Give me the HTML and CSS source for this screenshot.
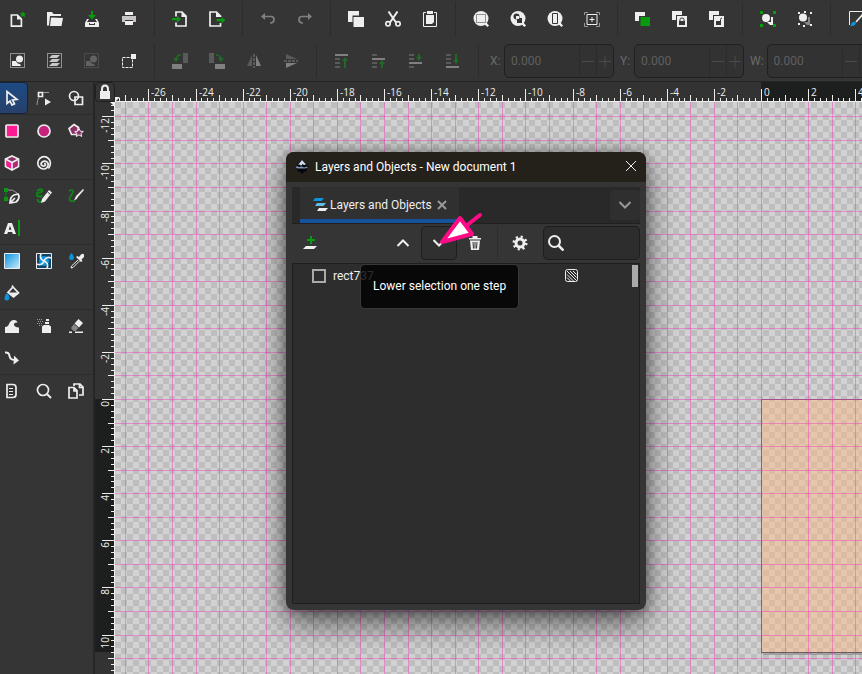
FILE: index.html
```html
<!DOCTYPE html>
<html lang="en">
<head>
    <meta charset="UTF-8">
    <meta name="viewport" content="width=device-width, initial-scale=1.0">
    <title>New document 1</title>
    <link rel="stylesheet" href="styles.css">
</head>
<body>

<header class="toolbars">
    <div class="toolbar">
        <button aria-label="New"><svg viewBox="0 0 16 16"><path class="line thick" d="M1.4 4h6l4 4v7.2h-10z"/><path d="M7 3.5v5h5z"/><path class="green" d="M13 0l1 2.3 2.4.1-1.9 1.5.7 2.4L13 5l-2.2 1.3.7-2.4-1.9-1.5 2.4-.1z"/></svg></button>
        <button aria-label="Open"><svg viewBox="0 0 16 16"><path d="M0 1h5l1.500 2H14v2H3L2 14.500H0z"/><path d="M4 6.500l12 .5-1.500 8H3z"/></svg></button>
        <button aria-label="Save"><svg viewBox="0 0 16 16"><path class="green" d="M7 0h2v4h3L8 8.500 4 4h3z"/><path d="M3 8h2l-2 3h10l-2-3h2l2 4v4H1v-4zM5 12v2h6v-2h-1v1H6v-1z" fill-rule="evenodd"/></svg></button>
        <button aria-label="Print"><svg viewBox="0 0 16 16"><path d="M4 1h8v3H4z"/><path fill="#c8c4c4" d="M1 5h14v6h-3V9H4v2H1z"/><path d="M4 10h8v4H4z"/></svg></button>
        <span class="sep"></span>
        <button aria-label="Import"><svg viewBox="0 0 16 16"><path class="line thick" d="M4 5.500V1h6l4 4v10H4v-3.500"/><path d="M9.500 1v5H15z"/><path class="green" d="M0 7h5V5l4 3.200-4 3.200V9.300H0z"/></svg></button>
        <button aria-label="Export"><svg viewBox="0 0 16 16"><path class="line thick" d="M11.500 6V5l-4-4H1v14h10.500v-3"/><path d="M7 1v5h5.500z"/><path class="green" d="M7.500 8h5V6l4 3.200-4 3.200v-2.100h-5z"/></svg></button>
        <span class="sep"></span>
        <button class="off" aria-label="Undo"><svg viewBox="0 0 16 16"><path class="line thick" d="M4 5.500h7q3 0 3 3t-3 3.500h-1"/><path d="M1 5.500L5 2v7z"/></svg></button>
        <button class="off" aria-label="Redo"><svg viewBox="0 0 16 16"><path class="line thick" d="M12 5.500H5q-3 0-3 3T5 12h1"/><path d="M15 5.500L11 2v7z"/></svg></button>
        <span class="sep"></span>
        <button aria-label="Copy"><svg viewBox="0 0 16 16"><path d="M0 0h11v4.500H4.500V11H0z"/><path d="M5.500 6H16v10H5.500z"/></svg></button>
        <button aria-label="Cut"><svg viewBox="0 0 16 16"><circle class="line thick" cx="3" cy="12.800" r="2.200"/><circle class="line thick" cx="13" cy="12.800" r="2.200"/><path class="line" stroke-width="2" d="M3.500.5l7.500 11M12.500.5L5 11.500"/></svg></button>
        <button aria-label="Paste"><svg viewBox="0 0 16 16"><path class="line" d="M4 1.500H1.500v14h13v-14H12"/><path d="M5 0h6v3H5zM4 4h8v7l-2 2H4z"/></svg></button>
        <span class="sep"></span>
        <button aria-label="Zoom selection"><svg viewBox="0 0 16 16"><circle cx="8" cy="7.500" r="7.500"/><path d="M11 13l2-2 3 3.500-1.500 1.500z"/><path class="cut dots" d="M3.500 3.500h9v8h-9z"/></svg></button>
        <button aria-label="Zoom drawing"><svg viewBox="0 0 16 16"><circle cx="8" cy="7.500" r="7.500"/><path d="M11 13l2-2 3 3.500-1.500 1.500z"/><circle class="hole" cx="6.500" cy="5.500" r="3"/><path class="hole" d="M7 7h5v5H7z"/><path d="M6 5h3v3H6z"/></svg></button>
        <button aria-label="Zoom page"><svg viewBox="0 0 16 16"><circle cx="8" cy="7.500" r="7.500"/><path d="M11 13l2-2 3 3.500-1.500 1.500z"/><path class="cut" d="M5.500 2.500h5v10h-5z"/></svg></button>
        <button aria-label="Center page"><svg viewBox="0 0 16 16"><path class="line dim" d="M.5 4V1.500H4M12 1.500h3.500V4M15.500 12v3.500H12M4 15.500H.5V12"/><path class="line" d="M3 3.500h10v10H3zM8 6v5M5.500 8.500h5"/></svg></button>
        <span class="sep"></span>
        <button aria-label="Duplicate"><svg viewBox="0 0 16 16"><path d="M0 1h10v4H4v5H0z"/><path class="green" d="M5.500 6H15v9H5.500z"/></svg></button>
        <button aria-label="Clone"><svg viewBox="0 0 16 16"><path d="M0 0h10v4H4v5H0z"/><path d="M5 5h10v11H5z"/><path class="cut" d="M8 10V8.500Q8 7 10 7t2 1.500V10"/><path class="hole" d="M7 10h6v4H7z"/></svg></button>
        <button aria-label="Unlink clone"><svg viewBox="0 0 16 16"><path d="M0 0h10v4H4v5H0z"/><path d="M5 5h10v11H5z"/><path class="cut" d="M11.500 10V8.500Q11.500 7 13 7"/><path class="hole" d="M7 10h5v4H7z"/></svg></button>
        <span class="sep"></span>
        <button aria-label="Group"><svg viewBox="0 0 16 16"><path class="green" d="M0 0h3v3H0zM13 0h3v3h-3zM0 13h3v3H0zM13 13h3v3h-3z"/><circle cx="6" cy="7" r="4"/><path d="M11 6v5H7l3 3h3V6z"/></svg></button>
        <button aria-label="Ungroup"><svg viewBox="0 0 16 16"><path d="M1 1h2v2H1zM7 0h2v2H7zM13 1h2v2h-2zM1 12h2v2H1zM6 14h2v2H6zM13 13h2v2h-2z"/><circle cx="6" cy="6.500" r="4"/><path fill="#888" d="M11 6v5H7l3 3h3V6z"/></svg></button>
        <span class="sep"></span>
        <button aria-label="Fill and stroke"><svg viewBox="0 0 16 16"><path class="line" d="M1.500 14V.5H16"/><path class="line thick" d="M16 2l-8 9"/><path class="blue" d="M1 15.500q2-.5 2.500-3T7 11l1 1q0 3-7 3.500z"/></svg></button>
    </div>
    <div class="toolbar">
        <button aria-label="Select all"><svg viewBox="0 0 16 16"><path class="line dots" d="M.5.5h14v14H.500z"/><circle cx="9.500" cy="6" r="3.500"/><path d="M2 8h4q1 3 4 3l1 2H2z"/></svg></button>
        <button aria-label="Select all in all layers"><svg viewBox="0 0 16 16"><path class="line dots" d="M.5.5h14v14H.500z"/><path fill="#c8c8c8" d="M5 2h8l-3 3H2zM5 6h8l-3 3H2zM5 10h8l-3 3H2z"/></svg></button>
        <button class="off" aria-label="Deselect"><svg viewBox="0 0 16 16" opacity=".6"><path class="line dots" d="M.5.5h14v14H.500z"/><circle cx="9.500" cy="6" r="3.500"/><path d="M2 8h4q1 3 4 3l1 2H2z"/></svg></button>
        <button aria-label="Touch selection"><svg viewBox="0 0 16 16"><path class="line dashes" d="M1.500 4.500h10v10h-10z"/><path d="M10 1h5v5h-5z"/></svg></button>
        <span class="sep"></span>
        <button class="off" aria-label="Rotate left"><svg viewBox="0 0 16 16"><path d="M0 11h10v5H0z"/><path fill="#5a5a5a" d="M11 0h5v10h-5z"/><path class="line leaf thick" d="M9 2Q5 2 4 6"/><path class="leaf" d="M1 5h6l-3 4z"/></svg></button>
        <button class="off" aria-label="Rotate right"><svg viewBox="0 0 16 16"><path d="M6 11h10v5H6z"/><path fill="#5a5a5a" d="M0 0h5v10H0z"/><path class="line leaf thick" d="M7 2q4 0 5 4"/><path class="leaf" d="M9 5h6l-3 4z"/></svg></button>
        <button class="off" aria-label="Flip horizontal"><svg viewBox="0 0 16 16"><path fill="#5a5a5a" d="M6 2v11H1z"/><path d="M10 2v11h5z"/><path class="line dashes" d="M8 1v14"/></svg></button>
        <button class="off" aria-label="Flip vertical"><svg viewBox="0 0 16 16"><path fill="#5a5a5a" d="M3 6h11L3 1z"/><path d="M3 10h11L3 15z"/><path class="line dashes" d="M1 8h14"/></svg></button>
        <span class="sep"></span>
        <button class="off" aria-label="Raise to top"><svg viewBox="0 0 16 16"><path d="M1 1h13v2H1z"/><path fill="#5a5a5a" d="M1 5h5v2H1zM1 9h5v2H1zM1 13h5v2H1z"/><path class="leaf" d="M10 15V8H8l3-4 3 4h-2v7z"/></svg></button>
        <button class="off" aria-label="Raise"><svg viewBox="0 0 16 16"><path d="M1 5h13v2H1z"/><path fill="#5a5a5a" d="M1 1h5v2H1zM1 9h5v2H1zM1 13h5v2H1z"/><path class="leaf" d="M10 15v-4H8l3-4 3 4h-2v4z"/></svg></button>
        <button class="off" aria-label="Lower"><svg viewBox="0 0 16 16"><path d="M1 9h13v2H1z"/><path fill="#5a5a5a" d="M1 1h5v2H1zM1 5h5v2H1zM1 13h5v2H1z"/><path class="leaf" d="M10 1v3H8l3 4 3-4h-2V1z"/></svg></button>
        <button class="off" aria-label="Lower to bottom"><svg viewBox="0 0 16 16"><path d="M1 13h13v2H1z"/><path fill="#5a5a5a" d="M1 1h5v2H1zM1 5h5v2H1zM1 9h5v2H1z"/><path class="leaf" d="M10 1v6H8l3 4 3-4h-2V1z"/></svg></button>
        <span class="sep"></span>
        <label for="pos-x">X:</label>
        <div class="spin"><input id="pos-x" type="text" value="0.000" disabled><button disabled aria-label="Less"><svg viewBox="0 0 16 16"><path class="line" d="M2 8.500h12"/></svg></button><button disabled aria-label="More"><svg viewBox="0 0 16 16"><path class="line" d="M2 8.500h12M8 2.500v12"/></svg></button></div>
        <label for="pos-y">Y:</label>
        <div class="spin"><input id="pos-y" type="text" value="0.000" disabled><button disabled aria-label="Less"><svg viewBox="0 0 16 16"><path class="line" d="M2 8.500h12"/></svg></button><button disabled aria-label="More"><svg viewBox="0 0 16 16"><path class="line" d="M2 8.500h12M8 2.500v12"/></svg></button></div>
        <label for="size-w">W:</label>
        <div class="spin"><input id="size-w" type="text" value="0.000" disabled><button disabled aria-label="Less"><svg viewBox="0 0 16 16"><path class="line" d="M2 8.500h12"/></svg></button><button disabled aria-label="More"><svg viewBox="0 0 16 16"><path class="line" d="M2 8.500h12M8 2.500v12"/></svg></button></div>
    </div>
</header>

<main class="workspace">
    <nav class="toolbox">
        <div class="tools">
            <button class="active" aria-label="Selector"><svg viewBox="0 0 16 16"><path class="line thick" d="M3 1.500v12l3-2.500 2 4 2.500-1.200-2-3.800 4.500-.5z"/></svg></button>
            <button aria-label="Node"><svg viewBox="0 0 16 16"><path class="line thick" d="M2.500 2.500h4v4h-4z"/><path class="line dim" d="M7 2.500h6M3 7q-2 3-2 8"/><path d="M9 8.500l6 3.500-6 3.500z"/></svg></button>
            <button aria-label="Shape builder"><svg viewBox="0 0 16 16"><circle class="line thick" cx="6" cy="6" r="4.500"/><path class="line thick" d="M7 7h7.500v7.500H7z"/></svg></button>
        </div>
        <div class="tools">
            <button aria-label="Rectangle"><svg viewBox="0 0 16 16"><rect class="line thick pink" x="2" y="2" width="12" height="12" rx="1"/></svg></button>
            <button aria-label="Ellipse"><svg viewBox="0 0 16 16"><circle class="line thick magenta" cx="8" cy="8" r="6"/></svg></button>
            <button aria-label="Star"><svg viewBox="0 0 16 16"><path class="line thick plum" d="M6 1.500l4.500 3-1.500 7H3.500L1 5.500z"/><path class="line plum" d="M11 5.500l1.300 2.700 3 .3-2.300 2 .7 3-2.700-1.600-2.700 1.600.7-3-2.300-2 3-.3z"/></svg></button>
            <button aria-label="3D box"><svg viewBox="0 0 16 16"><path class="line thick plum" d="M8 1l6.500 3v7.500L8 15l-6.500-3.500V4z"/><path class="pink" d="M2.500 5.500L7 8v5.500l-4.500-2.500z"/><path fill="#b02a76" d="M13.500 5.500L9 8v5.500l4.500-2.500z"/><path class="line thick" d="M1.500 4L8 7.500 14.500 4M8 7.500V15"/></svg></button>
            <button aria-label="Spiral"><svg viewBox="0 0 16 16"><path class="line thick" d="M8 8.500a1.300 1.300 0 0 1 1.500 1.500A2.500 2.500 0 0 1 5 9a3.700 3.700 0 0 1 7.200 0 4.600 4.600 0 0 1-4.700 5A6 6 0 0 1 1.800 8 6.300 6.300 0 0 1 14.400 8q0 3-2 5.500"/></svg></button>
        </div>
        <div class="tools">
            <button aria-label="Pen"><svg viewBox="0 0 16 16"><path class="green" d="M0 0h4v4H0zM0 9h4v4H0z"/><path class="line vine" d="M2 2v9"/><path class="line dim" d="M4 2q5-1 9 3"/><path class="line thick" d="M6 15q0-6 4-8l4-1 1 2q0 4-3 6zM6 15l5-5"/></svg></button>
            <button aria-label="Pencil"><svg viewBox="0 0 16 16"><path class="line vine" stroke-width="2" d="M1 3q4-3 5-1T2 5t0 3 3-1M2 11q-1 3 3 3"/><path d="M6 11l7-9 3 2.500-7 9-4 1.500z"/><path class="cut" d="M11.500 4l3 2.500"/></svg></button>
            <button aria-label="Calligraphy"><svg viewBox="0 0 16 16"><path class="line vine thick" d="M1 3q4-2 4 0T2 9q-2 5 5 4"/><path d="M15 1l1 1-6 7q-1 3-4 3.500Q7 10 8 8z"/></svg></button>
            <button aria-label="Text"><svg viewBox="0 0 16 16"><path d="M4 3h4l4 11H8.800l-.7-2H4l-.8 2H0zM4.700 9.700h2.700L6 5.700z" fill-rule="evenodd"/><path class="green" d="M14 0h2v16h-2z"/></svg></button>
        </div>
        <div class="tools">
            <button aria-label="Gradient"><svg viewBox="0 0 16 16"><defs><linearGradient id="sky" x2="1" y2="1"><stop stop-color="#0a94e0"/><stop offset="1" stop-color="#c8e8fa"/></linearGradient></defs><path fill="url(#sky)" d="M1 1h14v14H1z"/><path class="line" d="M.5.5h15v15H.500z"/></svg></button>
            <button aria-label="Mesh"><svg viewBox="0 0 16 16"><path fill="#0c4568" d="M1 1h14v14H1z"/><circle class="blue" cx="8" cy="8" r="5"/><path class="line" d="M.5.5h15v15H.500z"/><path class="line thick" d="M8 8q-5-2-3-7M8 8q5 2 3 7M8 8q2-5 7-3M8 8q-2 5-7 3"/></svg></button>
            <button aria-label="Dropper"><svg viewBox="0 0 16 16"><path class="blue" d="M3.500 0Q6 3 6 5 5.500 7 3.500 7T1 5q0-2 2.500-5z"/><path class="line" d="M10 7l-6.500 6-.5 2 2-.5L11.500 8"/><path d="M8 4l1.500-1 1.500 1 2-2.500q2-1.500 3 0t-.5 3l-2 2 1 1.500-1.500 1z"/></svg></button>
            <button aria-label="Paint bucket"><svg viewBox="0 0 16 16"><path class="line thick" d="M9 2l5.500 6-5 4-5.500-4.500zM9 2L8 .5"/><path d="M5 7.500h9.500L10 12z"/><path class="blue" d="M3 8q2.500 3 2.500 5T3 15.500.5 13 3 8z"/></svg></button>
        </div>
        <div class="tools">
            <button aria-label="Tweak"><svg viewBox="0 0 16 16"><path d="M1 15V9q3 0 4-3 1.500-4 5-4 3 0 3.500 2.500Q10 4 10 6.500 10 9 15 9.500V15z"/></svg></button>
            <button aria-label="Spray"><svg viewBox="0 0 16 16"><path d="M6 8.500L8 7h5l2 1.500V15H6zM9 4h4v2H9zM10 1h3v2h-3z"/><path class="line dim dots" d="M1 1.500h6M2 3.500h6M1 5.500h6M3 7.500h3"/></svg></button>
            <button aria-label="Eraser"><svg viewBox="0 0 16 16"><path d="M10.500 1l4.500 4-4 4.500-4.500-4zM1 13.500h3v1.500H1zM7 13.500h8v1.500H7z"/><path class="dimfill" d="M6 6l4.500 4-3 3h-2L3 10z"/></svg></button>
            <button aria-label="Connector"><svg viewBox="0 0 16 16"><path class="line" stroke-width="2" d="M1 2.500q4-.5 4.500 3.500T11 10"/><path d="M10 5.500l5 5-5.500 4z"/></svg></button>
        </div>
        <div class="tools">
            <button aria-label="Measure"><svg viewBox="0 0 16 16"><path class="line thick" d="M3 1.500h6q3 0 3 3v7q0 3-3 3H3z"/><path class="line" d="M5 5.500h4M5 8.500h4M5 11.500h4"/></svg></button>
            <button aria-label="Zoom"><svg viewBox="0 0 16 16"><circle class="line thick" cx="7" cy="7" r="5.500"/><path class="line" stroke-width="2" d="M11 11l4 4"/></svg></button>
            <button aria-label="Pages"><svg viewBox="0 0 16 16"><path class="line thick" d="M1 4.500h5l3 3V15H1zM6 3V1h6l3 3v8h-4M6 4.500V8h3M11.500 1v3.500H15"/></svg></button>
        </div>
    </nav>

    <section class="desk">
        <button class="guide-lock" aria-label="Lock guides"><svg viewBox="0 0 16 16"><path class="line" stroke-width="2" d="M5 8V5q0-3.500 3-3.500T11 5v3"/><path d="M3 7h10v8H3z"/></svg></button>
        <svg class="ruler" id="rulerTop"></svg>
        <svg class="ruler" id="rulerLeft"></svg>
        <svg class="canvas" id="canvas"></svg>
    </section>
</main>

<div class="dialog" role="dialog" aria-labelledby="dialogTitle">
    <div class="titlebar">
        <svg viewBox="0 0 16 16"><path fill="#05070c" d="M8 1l7 7-3 2 1 2-3 1-2 2-2-2-3-1 1-2-3-2z"/><path fill="#cfdcf0" d="M8 1l4 4.500-2 .5-1.500-1L7 7 6 5.500 4 6z"/><path fill="#7f97bd" d="M3 7l2 1 3-.5 2 1 3-1 1 1-3 1H4L1.500 8.500z"/></svg>
        <h1 id="dialogTitle">Layers and Objects - New document 1</h1>
        <button aria-label="Close"><svg viewBox="0 0 16 16"><path class="line" d="M3 2l10 10M13 2L3 12"/></svg></button>
    </div>
    <div class="tabs">
        <div class="tab">
            <svg viewBox="0 0 16 16"><path class="blue" d="M3 1h9l-2.500 3H1z"/><path fill="#62bdeb" d="M5 6h9l-2.500 3H3z"/><path d="M7 11h9l-2.500 3H5z"/></svg>
            <span>Layers and Objects</span>
            <button aria-label="Close tab"><svg viewBox="0 0 16 16"><path class="line dim" stroke-width="2" d="M4 4l8 8M12 4l-8 8"/></svg></button>
        </div>
        <button class="menu" aria-label="Dialogs"><svg viewBox="0 0 16 16"><path class="line dim" stroke-width="2" d="M2.500 5L8 10.500 13.500 5"/></svg></button>
    </div>
    <div class="actions">
        <button aria-label="Add layer"><svg viewBox="0 0 16 16"><path class="green" d="M8 1h2v3h3v2h-3v3H8V6H5V4h3z"/><path d="M4 11h11l-3 3H1z"/></svg></button>
        <span class="fill"></span>
        <button aria-label="Raise selection one step"><svg viewBox="0 0 16 16"><path class="line" stroke-width="2" d="M2.500 11L8 5.500l5.500 5.500"/></svg></button>
        <button class="hover" aria-label="Lower selection one step"><svg viewBox="0 0 16 16"><path class="line" stroke-width="2" d="M2.500 5L8 10.500 13.500 5"/></svg></button>
        <button aria-label="Delete"><svg viewBox="0 0 16 16"><path d="M2 3h12v1.500H2zM5.500 1h5v2h-5zM3 5.500h10L12 15H4z"/><path class="cut" d="M6 7l.5 6.500M8 7v6.500M10 7l-.5 6.500"/></svg></button>
        <span class="sep"></span>
        <button aria-label="Settings"><svg viewBox="0 0 16 16"><circle class="line" stroke-width="3" cx="8" cy="8" r="4"/><circle class="line gear" cx="8" cy="8" r="6"/></svg></button>
        <label class="search" for="layerSearch"><svg viewBox="0 0 16 16"><circle class="line" stroke-width="2" cx="6.500" cy="6.500" r="5.500"/><path class="line" stroke-width="2.500" d="M10.500 10.500l5 5"/></svg><input id="layerSearch" type="search" aria-label="Search layers"></label>
    </div>
    <div class="objects">
        <div class="object">
            <svg viewBox="0 0 16 16"><path class="line shape" stroke-width="2" d="M2 2h12v12H2z"/></svg>
            <span class="name">rect737</span>
            <svg viewBox="0 0 16 16"><rect class="line" x="1.500" y="1.500" width="12" height="12" rx="2"/><path class="line" d="M3 9.500L6.500 13M3 6.500l6.500 6.500M3 3l9.500 9.500M6 3l6.500 6.500M9 3l3.500 3.500"/></svg>
        </div>
        <div class="scrollbar"></div>
    </div>
    <div class="tooltip" role="tooltip">Lower selection one step</div>
    <svg class="pointer" viewBox="0 0 46 34"><path fill="none" stroke="#ff0a87" stroke-width="4" stroke-linecap="round" d="M28 16L42 5"/><path fill="#fff" stroke="#ff0a87" stroke-width="4" stroke-linejoin="round" d="M4 32L22 8l12 16z"/></svg>
</div>

<script src="script.js"></script>
</body>
</html>
```
FILE: styles.css
```css
* {
    box-sizing: border-box;
}
body {
    margin: 0;
    height: 100vh;
    display: flex;
    flex-direction: column;
    overflow: hidden;
    background-color: #353535;
    color: #eee;
    font-family: Roboto, "Open Sans", sans-serif;
    font-size: 12px;
}
button {
    display: flex;
    align-items: center;
    justify-content: center;
    flex-shrink: 0;
    padding: 0;
    border: none;
    border-radius: 4px;
    background: none;
    color: inherit;
    font: inherit;
}
svg {
    width: 16px;
    height: 16px;
    flex-shrink: 0;
    fill: #eee;
}

/* icon strokes and fills */
.line {
    fill: none;
    stroke: #eee;
}
.thick {
    stroke-width: 1.7;
}
.green {
    fill: #0a9a0f;
}
.vine {
    stroke: #0f8518;
}
.blue {
    fill: #0a94e0;
}
.pink {
    fill: #ff1a93;
}
.magenta {
    fill: #c8237c;
}
.plum {
    fill: #8c2f66;
}
.dim {
    stroke: #999;
}
.shape {
    stroke: #aaa;
}
.dimfill {
    fill: #888;
}
.hole {
    fill: #353535;
}
.cut {
    fill: none;
    stroke: #353535;
}
.dots {
    stroke-dasharray: 1 1;
}
.dashes {
    stroke-dasharray: 3 1;
}
.gear {
    stroke-width: 3;
    stroke-dasharray: 2 2.700;
}
.off svg {
    fill: #808080;
}
.off .line {
    stroke: #808080;
}
.off .leaf {
    fill: #1f6b26;
}
.off .line.leaf {
    fill: none;
    stroke: #1f6b26;
}

/* top toolbars */
.toolbars {
    border-bottom: 1px solid #242424;
}
.toolbar {
    display: flex;
    gap: 2px;
    height: 38px;
    align-items: center;
    overflow: hidden;
}
.toolbar + .toolbar {
    height: 43px;
    padding-top: 2px;
}
.toolbar > button {
    width: 35px;
    height: 34px;
}
.sep {
    width: 12px;
    height: 34px;
    flex-shrink: 0;
    background: linear-gradient(#2c2c2c, #2c2c2c) center / 1px 100% no-repeat;
}
.toolbar label {
    min-width: 11px;
    margin: 0 1px 0 4px;
    color: #6a6a6a;
    flex-shrink: 0;
}
.spin {
    display: flex;
    flex-shrink: 0;
    width: 110px;
    height: 34px;
    border: 1px solid #202020;
    border-radius: 5px;
    background-color: #323232;
    overflow: hidden;
}
.spin input {
    flex: 1;
    min-width: 0;
    padding: 0 6px;
    border: none;
    background: none;
    color: #5f5f5f;
    font: inherit;
}
.spin button {
    width: 17px;
    border-left: 1px solid #2b2b2b;
    border-radius: 0;
}
.spin .line {
    stroke: #4a4a4a;
}

/* tools on the left */
.workspace {
    flex: 1;
    display: flex;
    min-height: 0;
}
.toolbox {
    width: 95px;
    padding-right: 1px;
    border-right: 2px solid #262626;
    overflow: hidden;
}
.tools {
    display: grid;
    grid-template-columns: repeat(3, 32px);
    grid-auto-rows: 32px;
    margin-left: -4px;
    border-bottom: 1px solid #2c2c2c;
}
.tools:last-child {
    border: none;
}
.tools .active {
    border: 1px solid #16243a;
    background: linear-gradient(#1d4a85, #28406a);
}

/* rulers and canvas */
.desk {
    flex: 1;
    display: grid;
    grid-template: 20px 1fr / 20px 1fr;
    min-width: 0;
}
.guide-lock {
    border: 1px solid #1e1e1e;
}
.ruler {
    width: 100%;
    height: 100%;
    background-color: #333;
}
.ruler .page-extent {
    fill: #1d1f1f;
}
.ruler text {
    font-family: "Open Sans", sans-serif;
    font-size: 10px;
}
.canvas {
    width: 100%;
    height: 100%;
    background: conic-gradient(#d2d2d2 25%, #bebebe 0 50%, #d2d2d2 0 75%, #bebebe 0) 0 0 / 12px 12px;
}
.page {
    fill: rgba(255, 183, 128, 0.45);
    stroke: #6d5b5b;
}
.page-shadow {
    fill: rgba(0, 0, 0, 0.2);
}
.grid-line {
    fill: rgba(240, 60, 190, 0.45);
}

/* floating dialog */
.dialog {
    position: absolute;
    left: 286px;
    top: 152px;
    width: 360px;
    height: 458px;
    display: flex;
    flex-direction: column;
    padding: 0 6px 6px;
    border-radius: 8px;
    background-color: #353535;
    box-shadow: 0 12px 32px rgba(0, 0, 0, 0.6), 0 0 12px rgba(0, 0, 0, 0.3);
}
.titlebar {
    display: flex;
    align-items: center;
    gap: 5px;
    height: 30px;
    margin: 0 -6px 5px;
    padding: 0 7px 0 8px;
    border-radius: 8px 8px 0 0;
    background-color: #24211b;
    color: #fff;
}
.titlebar h1 {
    flex: 1;
    margin: 0;
    font-size: 12px;
    font-weight: normal;
}
.tabs {
    display: flex;
    justify-content: space-between;
    height: 37px;
    padding-left: 8px;
    border-bottom: 1px solid #202020;
    background-color: #292929;
}
.tab {
    display: flex;
    align-items: center;
    gap: 2px;
    width: 159px;
    padding: 3px 0 0 12px;
    border-bottom: 4px solid #17529c;
    background-color: #303030;
}
.menu {
    width: 30px;
    height: 30px;
    margin-top: 3px;
    background-color: #2f2f2f;
}
.actions {
    display: flex;
    align-items: center;
    height: 39px;
    padding-bottom: 1px;
}
.actions button {
    width: 36px;
    height: 34px;
}
.actions .hover {
    border: 1px solid #1e1e1e;
    background-color: #303030;
}
.actions .sep {
    width: 9px;
}
.fill {
    flex: 1;
}
.search {
    display: flex;
    align-items: center;
    width: 97px;
    height: 34px;
    margin-left: 5px;
    padding-left: 4px;
    border: 1px solid #1e1e1e;
    border-radius: 5px;
    background-color: #2d2d2d;
}
.search input {
    width: 100%;
    min-width: 0;
    border: none;
    outline: none;
    background: none;
    color: #eee;
}
.objects {
    flex: 1;
    display: flex;
    justify-content: space-between;
    padding: 1px;
    border: 1px solid #1e1e1e;
    background-color: #2d2d2d;
}
.object {
    flex: 1;
    display: flex;
    align-items: center;
    gap: 6px;
    height: 22px;
    padding: 0 52px 0 17px;
}
.name {
    flex: 1;
}
.scrollbar {
    width: 6px;
    height: 22px;
    background-color: #aaa;
}
.tooltip {
    position: absolute;
    left: 74px;
    top: 112px;
    padding: 13px 12px;
    border: 1px solid rgba(255, 255, 255, 0.2);
    border-radius: 5px;
    background-color: rgba(0, 0, 0, 0.82);
    color: #fff;
    line-height: 17px;
    white-space: nowrap;
}
.pointer {
    position: absolute;
    left: 152px;
    top: 58px;
    width: 46px;
    height: 34px;
}
```
FILE: script.js
```js
const NS = "http://www.w3.org/2000/svg";
const UNIT = 23.56;
const ORIGIN = { x: 646, y: 297 };
const PAGE_HEIGHT = 253;

function add(parent, name, attrs, text) {
    const el = document.createElementNS(NS, name);
    for (const key in attrs) el.setAttribute(key, attrs[key]);
    if (text !== undefined) el.textContent = text;
    parent.appendChild(el);
}

function drawTopRuler(svg, width) {
    add(svg, "rect", { class: "page-extent", x: ORIGIN.x, y: 0, width: width, height: 20 });
    add(svg, "rect", { x: 0, y: 19, width: width, height: 1 });
    for (let i = Math.ceil(-ORIGIN.x / UNIT * 4); ORIGIN.x + i * UNIT / 4 < width; i++) {
        const x = Math.round(ORIGIN.x + i * UNIT / 4);
        const length = i % 8 === 0 ? 13 : i % 4 === 0 ? 7 : 4;
        add(svg, "rect", { x: x, y: 20 - length, width: 1, height: length });
        if (i % 8 === 0) add(svg, "text", { x: x + 3, y: 14 }, i / 4);
    }
    add(svg, "path", { d: "M0 15h5L0 20z" });
}

function drawLeftRuler(svg, height) {
    add(svg, "rect", { class: "page-extent", x: 0, y: ORIGIN.y, width: 20, height: PAGE_HEIGHT });
    add(svg, "rect", { x: 19, y: 0, width: 1, height: height });
    for (let i = Math.ceil(-ORIGIN.y / UNIT * 4); ORIGIN.y + i * UNIT / 4 < height; i++) {
        const y = Math.round(ORIGIN.y + i * UNIT / 4);
        const length = i % 8 === 0 ? 13 : i % 4 === 0 ? 7 : 4;
        add(svg, "rect", { x: 20 - length, y: y, width: length, height: 1 });
        if (i % 8 === 0) {
            add(svg, "text", { transform: `translate(14 ${y + 2}) rotate(-90)`, "text-anchor": "end" }, i / 4);
        }
    }
    add(svg, "path", { d: "M15 0h5v5z" });
}

function drawCanvas(svg, width, height) {
    add(svg, "rect", { class: "page-shadow", x: ORIGIN.x + 2, y: ORIGIN.y + PAGE_HEIGHT + 1, width: width, height: 2 });
    add(svg, "rect", { class: "page", x: ORIGIN.x + 0.5, y: ORIGIN.y + 0.5, width: width, height: PAGE_HEIGHT });
    for (let i = Math.ceil(-ORIGIN.x / UNIT); ORIGIN.x + i * UNIT < width; i++) {
        add(svg, "rect", { class: "grid-line", x: Math.round(ORIGIN.x + i * UNIT), y: 0, width: 1, height: height });
    }
    for (let i = Math.ceil(-ORIGIN.y / UNIT); ORIGIN.y + i * UNIT < height; i++) {
        add(svg, "rect", { class: "grid-line", x: 0, y: Math.round(ORIGIN.y + i * UNIT), width: width, height: 1 });
    }
}

function draw() {
    const canvas = document.getElementById("canvas");
    const top = document.getElementById("rulerTop");
    const left = document.getElementById("rulerLeft");
    const box = canvas.getBoundingClientRect();
    [canvas, top, left].forEach(svg => svg.replaceChildren());
    drawTopRuler(top, box.width);
    drawLeftRuler(left, box.height);
    drawCanvas(canvas, box.width, box.height);
}

draw();
window.addEventListener("resize", draw);
```
